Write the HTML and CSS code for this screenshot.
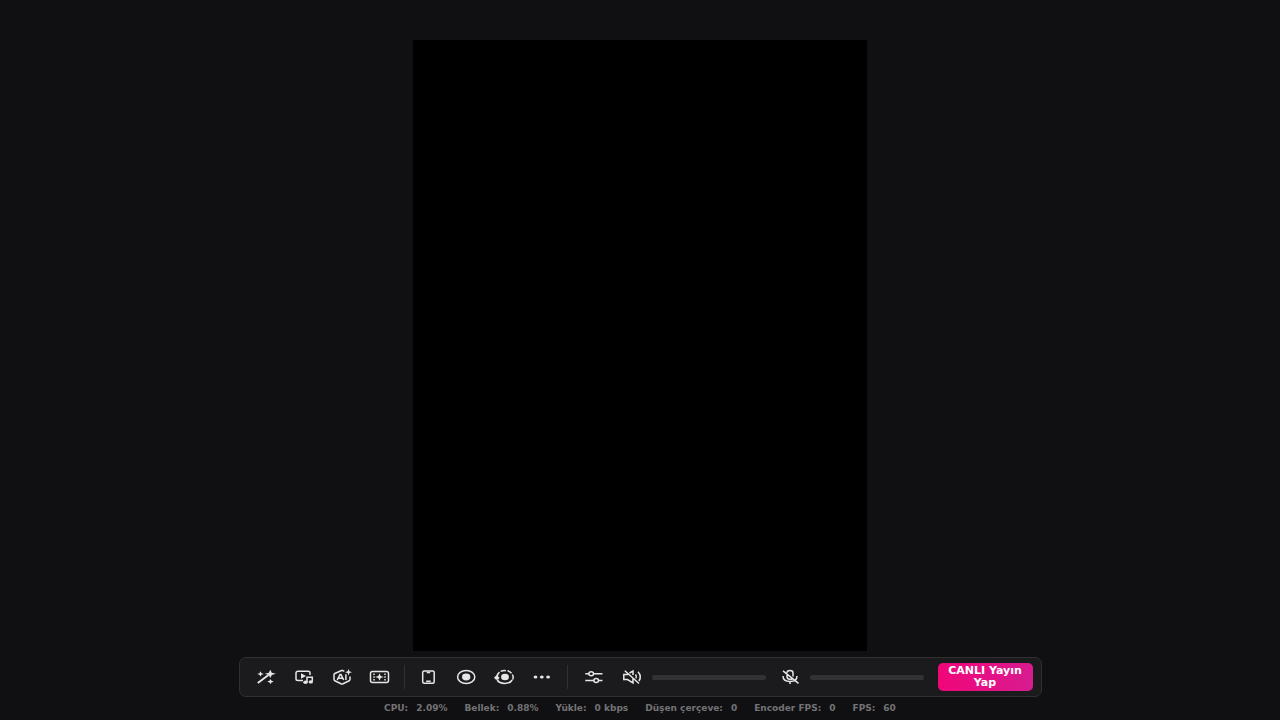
FILE: index.html
```html
<!DOCTYPE html>
<html lang="tr">
<head>
<meta charset="utf-8">
<meta name="viewport" content="width=device-width, initial-scale=1">
<title>Canlı yayın</title>
<link rel="stylesheet" href="styles.css">
</head>
<body>
<main class="stage"><div class="preview"></div></main>
<div class="toolbar" role="toolbar" aria-label="Yayın araçları">
  <div class="tools">
    <button class="tool" type="button" aria-label="Efektler"><svg viewBox="0 0 22 16">
      <path d="M2.800 14 13.500 6" stroke-width="1.900"/>
      <path class="solid" d="M15.300.8 16.800 3.700 20.800 4.800 16.800 5.900 15.300 9 13.800 5.900 9.800 4.800 13.800 3.700zM5.500 2.300 6.500 4.200 8.800 4.900 6.500 5.700 5.500 7.400 4.500 5.700 2.200 4.900 4.500 4.200zM15.500 10.100 16.500 11.800 18.800 12.600 16.500 13.400 15.500 15.100 14.500 13.400 12.200 12.600 14.500 11.800z"/>
    </svg></button>
    <button class="tool" type="button" aria-label="Medya ve müzik"><svg viewBox="0 0 22 16">
      <path d="M10 11.500H5Q3 11.500 3 10V4Q3 2.300 5 2.300H15Q17 2.300 17 4V6"/>
      <path class="solid" d="M8 4.300 13 7 8 9.700z"/>
      <path d="M14 13.200V8.200H19.300V12.200"/>
      <ellipse class="solid" cx="12.500" cy="13.300" rx="2.200" ry="1.700"/><ellipse class="solid" cx="17.800" cy="12.900" rx="2.200" ry="1.700"/>
    </svg></button>
    <button class="tool" type="button" aria-label="Yapay zekâ"><svg viewBox="0 0 22 16">
      <path d="M13.300 2.200 11 1.400 3.800 4.500Q3 5 3 5.700V10.600Q3 11.400 3.800 11.800L10 14.700Q11 15.100 12 14.700L18.200 11.800Q19 11.400 19 10.600V7.500"/>
      <path class="solid" d="M17.500 0 18.400 2.300 21 3.200 18.400 4.100 17.500 6.500 16.600 4.100 14 3.200 16.600 2.300z"/>
      <path d="M6.200 11 9 5.600H10L12.700 11M7.600 9.300H11.500M14.900 5.200V11"/>
    </svg></button>
    <button class="tool" type="button" aria-label="Klipler"><svg viewBox="0 0 22 16">
      <rect x="1.500" y="2.500" width="18" height="11" rx="2"/>
      <path d="M5 4.500V12M16 4.500V12" stroke-dasharray="1.500 1.300"/>
      <path class="solid" d="M10.500 4.200 11.700 6.900 14.800 8 11.700 9.100 10.500 11.800 9.300 9.100 6.200 8 9.300 6.900z"/>
    </svg></button>
  </div>
  <span class="divider"></span>
  <div class="tools">
    <button class="tool" type="button" aria-label="Dikey görünüm"><svg viewBox="0 0 22 16">
      <rect x="4.700" y="1.900" width="11.500" height="12.400" rx="1.500"/><path d="M8.700 3.400H12.200M8.200 12.200H12.700"/>
    </svg></button>
    <button class="tool" type="button" aria-label="Kaydet"><svg viewBox="0 0 22 16">
      <ellipse cx="10.200" cy="8" rx="8.600" ry="6.500"/><ellipse class="solid" cx="10.200" cy="8" rx="4.200" ry="3.400"/>
    </svg></button>
    <button class="tool" type="button" aria-label="Anlık tekrar"><svg viewBox="0 0 22 16">
      <path d="M3.200 11Q5.200 14.400 10.700 14.400T18.200 11"/><path d="M3 7.500Q4.200 1.600 11 1.600T19.200 8Q19.200 10 18.200 11" stroke-dasharray="5 1.500"/>
      <ellipse class="solid" cx="11" cy="8" rx="3.900" ry="3.300"/><path class="solid" d="M0 8.700 2.800 6 5.500 8.700 4.200 10.700H2z"/>
    </svg></button>
    <button class="tool" type="button" aria-label="Diğer"><svg viewBox="0 0 22 16">
      <ellipse class="solid" cx="3.500" cy="8" rx="1.900" ry="1.500"/><ellipse class="solid" cx="9.800" cy="8" rx="1.900" ry="1.500"/><ellipse class="solid" cx="16.100" cy="8" rx="1.900" ry="1.500"/>
    </svg></button>
  </div>
  <span class="divider"></span>
  <div class="tools mixer">
    <button class="tool" type="button" aria-label="Ses ayarları"><svg viewBox="0 0 22 16">
      <path d="M2.300 4.800H6M10.500 4.800H19.500M2.300 11.500H11M15.500 11.500H19.500"/><ellipse cx="8.200" cy="4.800" rx="2.300" ry="2"/><ellipse cx="13.200" cy="11.500" rx="2.300" ry="2"/>
    </svg></button>
    <div class="level">
      <button class="tool" type="button" aria-label="Sesi aç"><svg viewBox="0 0 22 16">
        <path d="M7 5.500H2.800V10.500H6.500L12 14V9M8.500 4 12 2V6M3.800 1.800 18 14.500M14.500 5.500Q16 7.500 15 9.500M17 2.800Q21.200 7.500 18 12"/>
      </svg></button>
      <input class="slider" type="range" min="0" max="100" value="0" aria-label="Ses düzeyi">
    </div>
  </div>
  <div class="level mic">
    <button class="tool" type="button" aria-label="Mikrofonu aç"><svg viewBox="0 0 22 16">
      <path d="M8 5V7.500Q8 10.300 11 10.300T13.500 9M8 3.800Q8 1.500 11 1.500T14 4V7.500M4 7Q4 12.500 11 12.500T18 7M11 12.500V15M4 1.800 19.500 14.300"/>
    </svg></button>
    <input class="slider" type="range" min="0" max="100" value="0" aria-label="Mikrofon düzeyi">
  </div>
  <button class="live" type="button">CANLI Yayın Yap</button>
</div>
<footer class="status">
  <span class="stat">CPU: <span>2.09%</span></span>
  <span class="stat">Bellek: <span>0.88%</span></span>
  <span class="stat">Yükle: <span>0 kbps</span></span>
  <span class="stat">Düşen çerçeve: <span>0</span></span>
  <span class="stat">Encoder FPS: <span>0</span></span>
  <span class="stat">FPS: <span>60</span></span>
</footer>
</body>
</html>
```
FILE: styles.css
```css
* { box-sizing: border-box; }
body {
  margin: 0;
  min-height: 100vh;
  display: flex;
  flex-direction: column;
  align-items: center;
  background: #101012;
  color: #f2f2f2;
  font-family: "DejaVu Sans", sans-serif;
}
.stage {
  flex: 1;
  align-self: stretch;
  display: flex;
  justify-content: center;
  padding: 40px 0 6px;
}
.preview { width: 35.4%; background: #000; }
.toolbar {
  display: flex;
  align-items: center;
  padding: 5px 8px 5px 15px;
  border: 1px solid #303032;
  border-radius: 7px;
  background: #1b1b1d;
}
.tools { display: flex; align-items: center; gap: 16px; }
.mixer { padding-left: 2px; }
.tool {
  width: 22px;
  height: 16px;
  padding: 0;
  border: 0;
  background: none;
  color: #e6e6e6;
}
.tool svg {
  display: block;
  width: 100%;
  height: 100%;
  fill: none;
  stroke: currentColor;
  stroke-width: 1.5;
  overflow: visible;
}
.tool .solid { fill: currentColor; stroke: none; }
.divider { width: 1px; height: 24px; margin: 0 13px; background: #303032; }
.level { display: flex; align-items: center; gap: 9px; }
.mic { margin: 0 14px 0 13px; }
.slider {
  appearance: none;
  width: 114px;
  height: 5px;
  margin: 0;
  border-radius: 2px;
  background: #323234;
}
.slider::-webkit-slider-thumb { appearance: none; width: 0; height: 0; }
.live {
  width: 95px;
  height: 28px;
  padding: 0 6px 1px;
  border: 0;
  border-radius: 5px;
  background: linear-gradient(100deg, #f10578, #d71c91);
  color: #fff;
  font: 700 11px/12px "DejaVu Sans", sans-serif;
}
.status {
  display: flex;
  gap: 17px;
  padding: 4px 0 5px;
  color: #737375;
  font-size: 9px;
  font-weight: 700;
  line-height: 14px;
}
.stat { display: flex; gap: 8px; }
```
